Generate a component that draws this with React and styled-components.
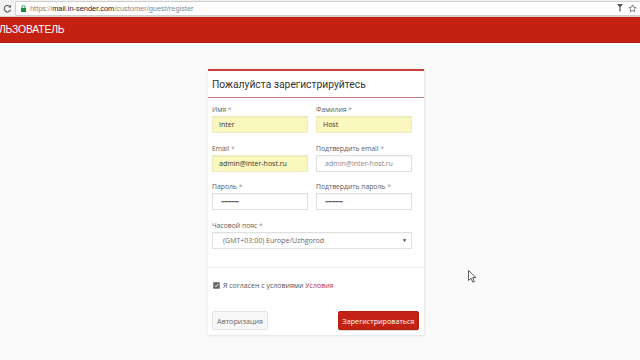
import React from 'react';
import styled, { createGlobalStyle } from 'styled-components';

const Global = createGlobalStyle`
  html, body {
    margin: 0;
    padding: 0;
    background: #fafafa;
    width: 640px;
    height: 360px;
    overflow: hidden;
    font-family: "Open Sans", "Liberation Sans", sans-serif;
  }
`;

const Page = styled.div`
  position: relative;
  width: 640px;
  height: 360px;
  overflow: hidden;
`;

const BrowserBar = styled.div`
  height: 17px;
  background: #f2f2f2;
  border-bottom: 1px solid #d4d4d4;
  display: flex;
  align-items: center;
  padding-left: 2px;
  box-sizing: border-box;
`;

const Reload = styled.div`
  width: 11px;
  display: flex;
  align-items: center;
  justify-content: center;
`;

const Omnibox = styled.div`
  flex: 1;
  height: 15px;
  margin-left: 2px;
  background: #fff;
  border: 1px solid #cfcfcf;
  border-right: none;
  border-radius: 2px 0 0 2px;
  display: flex;
  align-items: center;
  padding-left: 5px;
  box-sizing: border-box;
  font-family: "Liberation Sans", sans-serif;
  font-size: 7.4px;
  color: #888;
`;

const Url = styled.span`
  flex: 1;
  margin-left: 4px;
  white-space: nowrap;
`;

const Host = styled.span`
  color: #222;
`;

const Tools = styled.div`
  display: flex;
  gap: 5px;
  padding-right: 3px;
  align-items: center;
  color: #555;
  font-size: 9px;
`;

const Header = styled.div`
  height: 26px;
  background: #c52112;
  border-bottom: 1px solid #a81a0e;
  display: flex;
  align-items: center;
  color: #fff;
  font-family: "Liberation Sans", sans-serif;
  font-size: 10.4px;
  box-sizing: border-box;
`;

const Brand = styled.span`
  margin-left: -1px;
  letter-spacing: -0.2px;
`;

const Card = styled.div`
  width: 216px;
  margin: 26px 0 0 208px;
  background: #fff;
  border-top: 2px solid #c9403a;
  box-shadow: 0 1px 3px rgba(0, 0, 0, 0.08), 1px 0 2px rgba(0, 0, 0, 0.05);
  box-sizing: border-box;
`;

const CardTitle = styled.div`
  height: 26px;
  display: flex;
  align-items: center;
  padding-left: 4px;
  border-bottom: 1px solid #c27a78;
  font-family: Roboto, "Open Sans", sans-serif;
  font-size: 10.3px;
  color: #333;
`;

const CardBody = styled.div`
  padding: 5px 5px 5px 4px;
`;

const Grid = styled.div`
  width: 200px;
  display: grid;
  grid-template-columns: 96px 96px;
  column-gap: 8px;
`;

const Field = styled.div`
  grid-column: ${(p) => (p.$wide ? '1 / span 2' : 'auto')};
  margin-bottom: 8.6px;
`;

const Label = styled.div`
  height: 12px;
  line-height: 14px;
  font-size: 6.8px;
  color: #5c5c5c;
  margin-bottom: 1px;
  white-space: nowrap;
`;

const Star = styled.span`
  color: #999;
`;

const Input = styled.div`
  height: 17px;
  box-sizing: border-box;
  border: 1px solid ${(p) => (p.$filled ? '#ecebc4' : '#e0e0e0')};
  background: ${(p) => (p.$filled ? '#faf8be' : '#fff')};
  display: flex;
  align-items: center;
  padding-left: ${(p) => (p.$filled ? '6px' : '8px')};
  font-size: ${(p) => (p.$dots ? '6px' : '7px')};
  letter-spacing: ${(p) => (p.$dots ? '-0.8px' : '0')};
  color: ${(p) => (p.$muted ? '#888' : '#333')};
  box-shadow: inset 0 1px 1px rgba(0, 0, 0, 0.04);
`;

const Select = styled(Input)`
  justify-content: space-between;
  padding-left: 10px;
  padding-right: 4px;
  color: #666;
`;

const Caret = styled.span`
  font-size: 5px;
  color: #333;
`;

const Divider = styled.div`
  height: 1px;
  background: #f0f0f0;
  margin: 10px 0 0 -4px;
  width: 216px;
`;

const Agree = styled.label`
  display: flex;
  align-items: center;
  height: 14px;
  margin-top: 10px;
  font-size: 7px;
  color: #555;
  gap: 3px;
  padding-left: 1px;
`;

const Check = styled.span`
  width: 5px;
  height: 5px;
  background: #666;
  border: 1px solid #888;
  border-radius: 1px;
  display: inline-flex;
  align-items: center;
  justify-content: center;
`;

const Link = styled.span`
  color: #b9332a;
`;

const Actions = styled.div`
  display: flex;
  justify-content: space-between;
  align-items: center;
  margin-top: 19px;
`;

const Button = styled.div`
  height: 19px;
  box-sizing: border-box;
  display: flex;
  align-items: center;
  justify-content: center;
  width: ${(p) => (p.$primary ? '81px' : '56px')};
  font-size: 7.2px;
  border-radius: 2px;
  border: 1px solid ${(p) => (p.$primary ? '#b01d11' : '#e3e3e3')};
  background: ${(p) => (p.$primary ? '#c52115' : '#f8f8f8')};
  color: ${(p) => (p.$primary ? '#fff' : '#666')};
  box-shadow: ${(p) => (p.$primary ? '0 1px 1px rgba(0,0,0,0.15)' : 'none')};
  white-space: nowrap;
`;

const Cursor = styled.svg`
  position: absolute;
  left: 468px;
  top: 270px;
`;

export default function App() {
  return (
    <Page>
      <Global />
      <BrowserBar>
        <Reload>
          <svg width="9" height="9" viewBox="0 0 10 10">
            <path d="M8 3.2A3.6 3.6 0 1 0 8.4 6.4" fill="none" stroke="#555" strokeWidth="1.2" />
            <path d="M8.8 0.8V3.8H5.8Z" fill="#555" />
          </svg>
        </Reload>
        <Omnibox>
          <svg width="5" height="7" viewBox="0 0 5 7">
            <rect x="0" y="3" width="5" height="4" fill="#1e8e3e" />
            <path d="M1 3V2a1.5 1.5 0 0 1 3 0v1" fill="none" stroke="#1e8e3e" strokeWidth="0.9" />
          </svg>
          <Url>
            https://<Host>mail.in-sender.com</Host>/customer/guest/register
          </Url>
          <Tools>
            <svg width="6" height="8" viewBox="0 0 6 8">
              <path d="M0 0H6L3.6 3V7.5H2.4V3Z" fill="#555" />
            </svg>
            <svg width="9" height="9" viewBox="0 0 24 24">
              <path
                d="M12 2.5l2.9 6.1 6.6.8-4.9 4.6 1.3 6.6L12 17.3l-5.9 3.3 1.3-6.6-4.9-4.6 6.6-.8z"
                fill="none"
                stroke="#555"
                strokeWidth="2"
              />
            </svg>
          </Tools>
        </Omnibox>
      </BrowserBar>
      <Header>
        <Brand>ЛЬЗОВАТЕЛЬ</Brand>
      </Header>
      <Card>
        <CardTitle>Пожалуйста зарегистрируйтесь</CardTitle>
        <CardBody>
          <Grid>
            <Field>
              <Label>Имя <Star>*</Star></Label>
              <Input $filled>Inter</Input>
            </Field>
            <Field>
              <Label>Фамилия <Star>*</Star></Label>
              <Input $filled>Host</Input>
            </Field>
            <Field>
              <Label>Email <Star>*</Star></Label>
              <Input $filled>admin@inter-host.ru</Input>
            </Field>
            <Field>
              <Label>Подтвердить email <Star>*</Star></Label>
              <Input $muted>admin@inter-host.ru</Input>
            </Field>
            <Field>
              <Label>Пароль <Star>*</Star></Label>
              <Input $dots>••••••••••••</Input>
            </Field>
            <Field>
              <Label>Подтвердить пароль <Star>*</Star></Label>
              <Input $dots>••••••••••••</Input>
            </Field>
            <Field $wide>
              <Label>Часовой пояс <Star>*</Star></Label>
              <Select>
                (GMT+03:00) Europe/Uzhgorod
                <Caret>▼</Caret>
              </Select>
            </Field>
          </Grid>
          <Divider />
          <Agree>
            <Check>
              <svg width="5" height="5" viewBox="0 0 5 5">
                <path d="M0.8 2.6L2 3.8L4.3 1" fill="none" stroke="#fff" strokeWidth="0.9" />
              </svg>
            </Check>
            <span>
              Я согласен с условиями <Link>Условия</Link>
            </span>
          </Agree>
          <Actions>
            <Button>Авторизация</Button>
            <Button $primary>Зарегистрироваться</Button>
          </Actions>
        </CardBody>
      </Card>
      <Cursor width="9" height="13" viewBox="0 0 9 13">
        <path d="M0.5 0.5V10.5L3 8.2L4.8 12.2L6.4 11.5L4.7 7.6H8Z" fill="#fff" stroke="#333" strokeWidth="0.8" />
      </Cursor>
    </Page>
  );
}
